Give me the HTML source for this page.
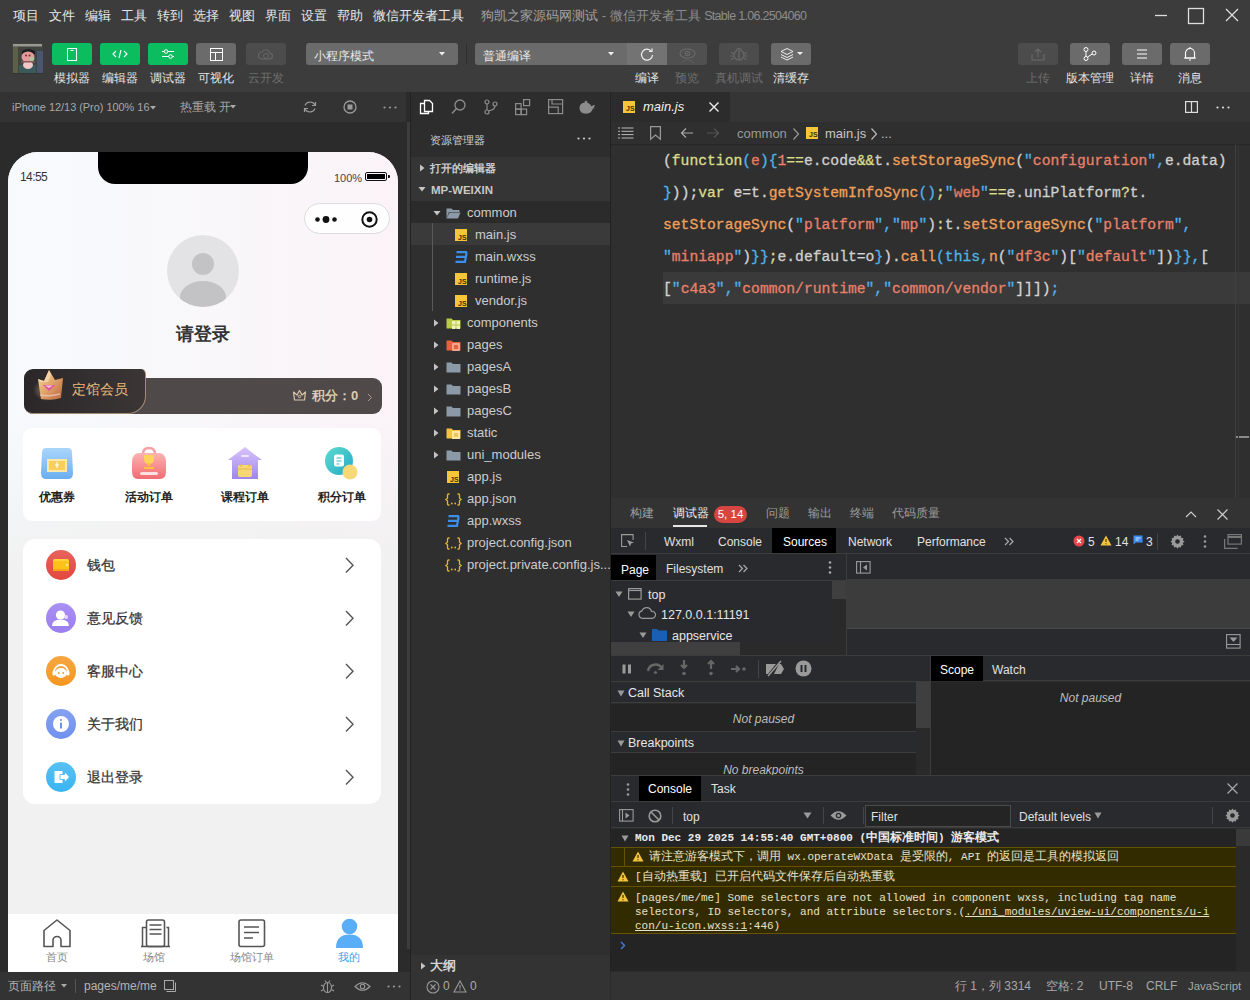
<!DOCTYPE html>
<html><head><meta charset="utf-8">
<style>
*{box-sizing:border-box;margin:0;padding:0}
html,body{width:1250px;height:1000px;overflow:hidden;background:#2c2c2c;font-family:"Liberation Sans",sans-serif;}
.a{position:absolute}
.w{white-space:nowrap}
svg{position:absolute;overflow:visible}
#top{left:0;top:0;width:1250px;height:92px;background:#3c3c3c}
.menu{top:1px;height:30px;line-height:30px;font-size:13px;color:#e8e8e8}
.tb{top:43px;width:40px;height:22px;border-radius:3px}
.g{background:#0bbd5f}
.gr{background:#6b6b6b}
.dm{background:#4c4c4c}
.lbl{top:71px;line-height:14px;font-size:12px;color:#e4e4e4;text-align:center}
.lbl.d{color:#6e6e6e}
/* explorer */
.row{left:411px;width:199px;height:22px;line-height:22px;font-size:13px;color:#cccccc}
.code{font-family:"Liberation Mono",monospace;font-size:14.68px;line-height:32px;height:32px;left:663px;white-space:pre;color:#d4d4d4;-webkit-text-stroke:0.3px currentColor}
.dt{font-size:12px;color:#e0e0e0;line-height:28px}
.mono{font-family:"Liberation Mono",monospace;font-size:11px;white-space:pre}
</style></head><body>
<div id="top" class="a">
  <div class="a menu w" style="left:13px">项目</div>
  <div class="a menu w" style="left:49px">文件</div>
  <div class="a menu w" style="left:85px">编辑</div>
  <div class="a menu w" style="left:121px">工具</div>
  <div class="a menu w" style="left:157px">转到</div>
  <div class="a menu w" style="left:193px">选择</div>
  <div class="a menu w" style="left:229px">视图</div>
  <div class="a menu w" style="left:265px">界面</div>
  <div class="a menu w" style="left:301px">设置</div>
  <div class="a menu w" style="left:337px">帮助</div>
  <div class="a menu w" style="left:373px">微信开发者工具</div>
  <div class="a menu w" style="left:481px;color:#a3a3a3">狗凯之家源码网测试 <span style="color:#8c8c8c">- 微信开发者工具 <span style="font-size:12.5px;letter-spacing:-0.7px">Stable 1.06.2504060</span></span></div>
  <!-- window controls -->
  <svg style="left:1150px;top:8px" width="100" height="16"><path d="M5 7.5h12" stroke="#ddd" stroke-width="1.3"/><rect x="38.5" y="0.5" width="15" height="15" fill="none" stroke="#ddd" stroke-width="1.3"/><path d="M76 1l12 12M88 1l-12 12" stroke="#ddd" stroke-width="1.3"/></svg>
  <!-- avatar -->
  <svg style="left:12px;top:43px;filter:blur(0.5px)" width="31" height="31"><rect x="0" y="0" width="31" height="31" fill="#3f4440"/><rect x="1" y="4" width="5" height="26" fill="#5e5f48"/><rect x="25" y="8" width="6" height="22" fill="#4a5670"/><rect x="7" y="22" width="17" height="9" fill="#3b5a5a"/><rect x="1" y="1" width="29" height="2.5" fill="#9a9890"/><path d="M10 8q6-4 13 0v3h-13z" fill="#1e1e1e"/><ellipse cx="16" cy="14" rx="6.5" ry="5.5" fill="#e39a9a"/><ellipse cx="20" cy="16" rx="2.5" ry="2" fill="#a8c8a0"/><circle cx="14" cy="12.5" r="1" fill="#7a2a2a"/><circle cx="17.5" cy="12.5" r="1" fill="#7a2a2a"/><ellipse cx="16" cy="22" rx="5" ry="4" fill="#f0c8c8"/><rect x="9" y="18" width="14" height="1.5" fill="#8a5a5a"/><rect x="0" y="30" width="31" height="1" fill="#333"/></svg>
  <div class="a tb g" style="left:52px"><svg style="left:15px;top:5px" width="10" height="13"><rect x="0.5" y="0.5" width="9" height="12" fill="none" stroke="#fff" stroke-width="1"/><path d="M3.5 2.5h3" stroke="#fff"/></svg></div>
  <div class="a tb g" style="left:100px"><svg style="left:12px;top:6px" width="16" height="10"><path d="M4 2L1 5l3 3M12 2l3 3-3 3M9 1L7 9" fill="none" stroke="#fff" stroke-width="1.1"/></svg></div>
  <div class="a tb g" style="left:148px"><svg style="left:13px;top:5px" width="14" height="12"><path d="M1 3.5h12M1 8.5h12" stroke="#fff" stroke-width="1"/><circle cx="5" cy="3.5" r="1.8" fill="#0bbd5f" stroke="#fff"/><circle cx="9.5" cy="8.5" r="1.8" fill="#0bbd5f" stroke="#fff"/></svg></div>
  <div class="a tb gr" style="left:196px"><svg style="left:14px;top:5px" width="13" height="13"><rect x="0.5" y="0.5" width="12" height="12" fill="none" stroke="#fff"/><path d="M0.5 4.5h12M5.5 4.5v8" stroke="#fff"/></svg></div>
  <div class="a tb dm" style="left:246px"><svg style="left:12px;top:6px" width="16" height="11"><path d="M4 10a3.5 3.5 0 0 1 0-7 4 4 0 0 1 7.5 1 3 3 0 0 1 0 6z" fill="none" stroke="#666" stroke-width="1.1"/><circle cx="8" cy="7" r="2.5" fill="none" stroke="#666"/></svg></div>
  <div class="a lbl w" style="left:52px;width:40px">模拟器</div>
  <div class="a lbl w" style="left:100px;width:40px">编辑器</div>
  <div class="a lbl w" style="left:148px;width:40px">调试器</div>
  <div class="a lbl w" style="left:196px;width:40px">可视化</div>
  <div class="a lbl d w" style="left:246px;width:40px">云开发</div>
  <!-- mode dropdown -->
  <div class="a" style="left:306px;top:43px;width:152px;height:22px;background:#6b6b6b;border-radius:3px;font-size:12px;line-height:27px;color:#e8e8e8;padding-left:8px" >小程序模式</div>
  <svg style="left:439px;top:52px" width="6" height="4"><path d="M0 0h6L3 3.5z" fill="#eee"/></svg>
  <div class="a" style="left:466px;top:43px;width:1px;height:22px;background:#303030"></div>
  <div class="a" style="left:475px;top:43px;width:152px;height:22px;background:#6b6b6b;border-radius:3px 0 0 3px;font-size:12px;line-height:27px;color:#e8e8e8;padding-left:8px" >普通编译</div>
  <svg style="left:608px;top:52px" width="6" height="4"><path d="M0 0h6L3 3.5z" fill="#eee"/></svg>
  <div class="a" style="left:627px;top:43px;width:40px;height:22px;background:#737373"><svg style="left:13px;top:4px" width="14" height="14"><path d="M11.5 4.5A5.5 5.5 0 1 0 12.5 8" fill="none" stroke="#f0f0f0" stroke-width="1.2"/><path d="M9 4.5h3V1.5" fill="none" stroke="#f0f0f0" stroke-width="1.2"/></svg></div>
  <div class="a" style="left:667px;top:43px;width:40px;height:22px;background:#505050;border-radius:0 3px 3px 0"><svg style="left:12px;top:5px" width="18" height="16"><ellipse cx="8.5" cy="5.5" rx="7.5" ry="4.5" fill="none" stroke="#6a6a6a" stroke-width="1.1"/><circle cx="8.5" cy="5.5" r="2.2" fill="none" stroke="#6a6a6a" stroke-width="1.1"/><circle cx="8.5" cy="5.5" r="0.8" fill="#6a6a6a"/><path d="M2 15l6.5-4 6.5 4M15 15l-6.5-4" fill="none" stroke="#5e5e5e" stroke-width="1"/></svg></div>
  <div class="a" style="left:719px;top:43px;width:40px;height:22px;background:#4c4c4c;border-radius:3px"><svg style="left:11px;top:4px" width="18" height="15"><circle cx="9" cy="8" r="5" fill="none" stroke="#686868" stroke-width="1.2"/><path d="M9 4v9M6.5 2.5q2.5-2 5 0M1 5.5l3 1.2M17 5.5l-3 1.2M0.5 9h3.5M17.5 9H14M1 12.5l3-1.2M17 12.5l-3-1.2" fill="none" stroke="#686868" stroke-width="1.2"/></svg></div>
  <div class="a" style="left:771px;top:43px;width:40px;height:22px;background:#6b6b6b;border-radius:3px"><svg style="left:9px;top:5px" width="24" height="12"><path d="M1 3.5l6-3 6 3-6 3z" fill="none" stroke="#f0f0f0" stroke-width="1"/><path d="M1 6.5l6 3 6-3M1 9l6 3 6-3" fill="none" stroke="#f0f0f0" stroke-width="1"/><path d="M17 4h6l-3 3z" fill="#f0f0f0"/></svg></div>
  <div class="a lbl w" style="left:627px;width:40px">编译</div>
  <div class="a lbl d w" style="left:667px;width:40px">预览</div>
  <div class="a lbl d w" style="left:709px;width:60px">真机调试</div>
  <div class="a lbl w" style="left:771px;width:40px">清缓存</div>
  <!-- right toolbar -->
  <div class="a tb dm" style="left:1018px"><svg style="left:13px;top:4px" width="14" height="14"><path d="M1 7v6h12V7" fill="none" stroke="#6a6a6a" stroke-width="1.1"/><path d="M7 10V2M4 5l3-3 3 3" fill="none" stroke="#6a6a6a" stroke-width="1.1"/></svg></div>
  <div class="a tb gr" style="left:1070px"><svg style="left:13px;top:4px" width="14" height="14"><circle cx="3" cy="2.5" r="2" fill="none" stroke="#fff"/><circle cx="3" cy="11.5" r="2" fill="none" stroke="#fff"/><circle cx="11" cy="6" r="2" fill="none" stroke="#fff"/><path d="M3 4.5v5M9.3 7L4.5 10" fill="none" stroke="#fff"/></svg></div>
  <div class="a tb gr" style="left:1122px"><svg style="left:14px;top:6px" width="12" height="10"><path d="M1 1h10M1 5h10M1 9h10" stroke="#fff" stroke-width="1.1"/></svg></div>
  <div class="a tb gr" style="left:1170px"><svg style="left:13px;top:3px" width="14" height="16"><path d="M2.5 12V7a4.5 4.5 0 0 1 9 0v5z" fill="none" stroke="#fff" stroke-width="1.1"/><path d="M1 12h12M7 1v1.5M6 14h2" stroke="#fff" stroke-width="1.1"/></svg></div>
  <div class="a lbl d w" style="left:1018px;width:40px">上传</div>
  <div class="a lbl w" style="left:1060px;width:60px">版本管理</div>
  <div class="a lbl w" style="left:1122px;width:40px">详情</div>
  <div class="a lbl w" style="left:1170px;width:40px">消息</div>
</div>
<!-- ============ SIMULATOR ============ -->
<div class="a" style="left:0;top:92px;width:411px;height:880px;background:#2b2b2b"></div>
<div class="a" style="left:0;top:92px;width:406px;height:30px;background:#333333"></div>
<div class="a w" style="left:12px;top:92px;line-height:30px;font-size:10.9px;color:#a8a8a8">iPhone 12/13 (Pro) 100% 16</div>
<svg style="left:150px;top:106px" width="6" height="4"><path d="M0 0h6L3 3.5z" fill="#aaa"/></svg>
<div class="a w" style="left:180px;top:92px;line-height:30px;font-size:12px;color:#a8a8a8">热重载 开</div>
<svg style="left:230px;top:105px" width="6" height="4"><path d="M0 0h6L3 3.5z" fill="#aaa"/></svg>
<svg style="left:303px;top:100px" width="14" height="14"><path d="M2 5.5A5.5 5.5 0 0 1 12 5M12 8.5A5.5 5.5 0 0 1 2 9" fill="none" stroke="#9a9a9a" stroke-width="1.2"/><path d="M12.5 2v3.5H9M1.5 12V8.5H5" fill="none" stroke="#9a9a9a" stroke-width="1.2"/></svg>
<svg style="left:343px;top:100px" width="14" height="14"><circle cx="7" cy="7" r="6" fill="none" stroke="#9a9a9a" stroke-width="1.3"/><rect x="4.5" y="4.5" width="5" height="5" fill="#9a9a9a"/></svg>
<svg style="left:383px;top:106px" width="14" height="3"><circle cx="1.5" cy="1.5" r="1.1" fill="#9a9a9a"/><circle cx="7" cy="1.5" r="1.1" fill="#9a9a9a"/><circle cx="12.5" cy="1.5" r="1.1" fill="#9a9a9a"/></svg>
<!-- sim scrollbar -->
<div class="a" style="left:407px;top:122px;width:3px;height:827px;background:#3d3d3d"></div>
<div class="a" style="left:410px;top:92px;width:1px;height:908px;background:#222"></div>
<!-- phone -->
<div class="a" style="left:8px;top:152px;width:390px;height:820px;border-radius:30px 30px 0 0;overflow:hidden;background:#f1f1f1">
  <div class="a" style="left:0;top:0;width:390px;height:420px;background:linear-gradient(90deg,#f7fafd 0%,#f9f7fa 55%,#fbf3f8 100%)"></div>
  <div class="a" style="left:0;top:260px;width:390px;height:160px;background:linear-gradient(180deg,rgba(241,241,241,0) 0%,#f1f1f1 100%)"></div>
  <!-- notch -->
  <div class="a" style="left:90px;top:0;width:210px;height:32px;background:#000;border-radius:0 0 17px 17px"></div>
  <div class="a w" style="left:12px;top:17.5px;font-size:12px;line-height:14px;color:#333;letter-spacing:-0.6px">14:55</div>
  <div class="a w" style="left:326px;top:20px;font-size:11px;line-height:12px;color:#444">100%</div>
  <div class="a" style="left:357px;top:20px;width:22px;height:9px;border:1.5px solid #111;border-radius:2px;padding:1px"><div style="width:100%;height:100%;background:#000"></div></div>
  <div class="a" style="left:379.5px;top:23px;width:2px;height:3px;background:#111;border-radius:0 1px 1px 0"></div>
  <!-- capsule -->
  <div class="a" style="left:296px;top:51px;width:86px;height:31px;border-radius:16px;background:rgba(255,255,255,0.85);border:1px solid #dcdcdc"></div>
  <svg style="left:310px;top:61px" width="80" height="16"><circle cx="-0.5" cy="6.5" r="2.3" fill="#111"/><circle cx="8" cy="6.5" r="3.4" fill="#111"/><circle cx="16.5" cy="6.5" r="2.3" fill="#111"/><circle cx="51.5" cy="6.5" r="7.2" fill="none" stroke="#111" stroke-width="2"/><circle cx="51.5" cy="6.5" r="2.8" fill="#111"/></svg>
  <!-- avatar -->
  <div class="a" style="left:158.5px;top:83px;width:72px;height:72px;border-radius:50%;background:#e3e3e5;overflow:hidden">
    <div class="a" style="left:25px;top:17.5px;width:22px;height:22px;border-radius:50%;background:#c3c3c5"></div>
    <div class="a" style="left:13px;top:46px;width:46px;height:32px;border-radius:50%;background:#c3c3c5"></div>
  </div>
  <div class="a w" style="left:0;top:172px;width:390px;text-align:center;font-size:17.5px;line-height:20px;font-weight:bold;color:#333">请登录</div>
  <!-- member bar -->
  <div class="a" style="left:16px;top:226px;width:358px;height:36px;border-radius:9px;background:#4f494a"></div>
  <div class="a" style="left:16px;top:217px;width:122px;height:45px;border-radius:9px 5px 18px 9px;background:linear-gradient(90deg,#2b2728,#3b3536);border-right:1.5px solid #a38b74;border-bottom:1.5px solid #a38b74;border-left:0;border-top:0"></div>
  <svg style="left:25px;top:216px" width="36" height="34"><defs><linearGradient id="cr" x1="0" y1="0" x2="1" y2="1"><stop offset="0" stop-color="#f7dcaa"/><stop offset="0.5" stop-color="#e0a46a"/><stop offset="1" stop-color="#b8643e"/></linearGradient><radialGradient id="gl" cx="0.5" cy="0.5" r="0.5"><stop offset="0" stop-color="#ffd9b0" stop-opacity="0.55"/><stop offset="1" stop-color="#ffd9b0" stop-opacity="0"/></radialGradient></defs><ellipse cx="14" cy="22" rx="14" ry="11" fill="url(#gl)"/><path d="M5 11l6 2 5-11 6 10 8-2-2 20q-8 3-20 1z" fill="url(#cr)"/><path d="M5 11l6 2 5-11 2 4-3 8-8 0z" fill="#fbe3b8" opacity="0.6"/><path d="M10 17h12l-6 6z" fill="#e05596"/><path d="M12 17.5h8l-4 2.5z" fill="#ffc3df"/><path d="M7 27q9 2 20-1" stroke="#f6c9c9" stroke-width="1.5" fill="none" opacity="0.7"/></svg>
  <div class="a w" style="left:64px;top:229px;font-size:14px;line-height:16px;color:#e9b97c">定馆会员</div>
  <svg style="left:284px;top:237px" width="15" height="12"><path d="M1.5 3l3.5 3 2.5-4.5 2.5 4.5 3.5-3-1 8h-10z" fill="none" stroke="#d8c6ac" stroke-width="1.2" stroke-linejoin="round"/><circle cx="7.5" cy="7.5" r="1.2" fill="none" stroke="#d8c6ac"/></svg>
  <div class="a w" style="left:304px;top:236px;font-size:13px;line-height:16px;color:#dccbb2;font-weight:bold">积分：0</div>
  <svg style="left:359px;top:241px" width="6" height="9"><path d="M1 1l3.5 3.5L1 8" fill="none" stroke="#aa9c90" stroke-width="1"/></svg>
  <!-- quick card -->
  <div class="a" style="left:15px;top:276px;width:358px;height:93px;border-radius:9px;background:#fff"></div>
  
  <svg style="left:32px;top:294px" width="34" height="34"><defs><linearGradient id="q1" x1="0" y1="0" x2="0" y2="1"><stop offset="0" stop-color="#a9d6fb"/><stop offset="1" stop-color="#6aaef0"/></linearGradient><linearGradient id="q2" x1="0" y1="0" x2="0" y2="1"><stop offset="0" stop-color="#fcb3b3"/><stop offset="1" stop-color="#f26b73"/></linearGradient><linearGradient id="q3" x1="0" y1="0" x2="0" y2="1"><stop offset="0" stop-color="#d7c4fb"/><stop offset="1" stop-color="#9f86ee"/></linearGradient><linearGradient id="q4" x1="0" y1="0" x2="1" y2="1"><stop offset="0" stop-color="#5fdcd0"/><stop offset="1" stop-color="#22a9c6"/></linearGradient></defs>
  <path d="M6 2h22q4 0 4 5l1 20q0 6-5 6H6q-5 0-5-6l1-20q0-5 4-5z" fill="url(#q1)"/><rect x="7" y="13" width="20" height="13" fill="#fde9a6"/><rect x="9" y="15" width="16" height="9" fill="#f8cf5a"/><path d="M17 16v6M15 19h4" stroke="#fff" stroke-width="1.2"/></svg>
  <svg style="left:123px;top:294px" width="36" height="34"><path d="M12 8q0-6 6-6t6 6" fill="none" stroke="#f8a0a6" stroke-width="2.5"/><path d="M8 7h20q6 0 7 8l0 10q0 8-6 8H7q-6 0-6-8l0-10q1-8 7-8z" fill="url(#q2)"/><path d="M13 9h10v4q0 5-5 5t-5-5z" fill="#ffd25a"/><rect x="16.5" y="17" width="3" height="3" fill="#ffc03a"/><rect x="13" y="21" width="10" height="2" fill="#ffc03a"/><rect x="9" y="26" width="18" height="3" rx="1.5" fill="#fde0e0"/></svg>
  <svg style="left:219px;top:294px" width="36" height="34"><path d="M18 1L35 14h-4v19H5V14H1z" fill="url(#q3)"/><rect x="14" y="9" width="8" height="2" rx="1" fill="#efe6ff"/><rect x="11" y="19" width="14" height="12" rx="2" fill="#f7d774"/><path d="M14 18v3M22 18v3M11 23h14" stroke="#e4b84a" stroke-width="1.2"/></svg>
  <svg style="left:316px;top:294px" width="36" height="36"><circle cx="15" cy="15" r="14" fill="url(#q4)"/><circle cx="26" cy="26" r="7.5" fill="#f8d877"/><rect x="10" y="8.5" width="10" height="12" rx="2" fill="#fff"/><path d="M12.5 12h5M12.5 15h5M12.5 18h3" stroke="#36b9c8" stroke-width="1.1"/></svg>

  <div class="a w" style="left:31px;top:338px;font-size:12px;line-height:15px;color:#222;font-weight:bold">优惠券</div>
  <div class="a w" style="left:116.7px;top:338px;font-size:12px;line-height:15px;color:#222;font-weight:bold">活动订单</div>
  <div class="a w" style="left:213.3px;top:338px;font-size:12px;line-height:15px;color:#222;font-weight:bold">课程订单</div>
  <div class="a w" style="left:310px;top:338px;font-size:12px;line-height:15px;color:#222;font-weight:bold">积分订单</div>
  <!-- menu card -->
  <div class="a" style="left:15px;top:387px;width:358px;height:265px;border-radius:12px;background:#fff"></div>
    <svg style="left:37.6px;top:398.4px" width="30" height="30"><defs><linearGradient id="m0" x1="0" y1="0" x2="0" y2="1"><stop offset="0" stop-color="#e2473f" stop-opacity="0.85"/><stop offset="1" stop-color="#e2473f"/></linearGradient></defs><circle cx="15" cy="15" r="15" fill="url(#m0)"/><rect x="7" y="9" width="16" height="12" rx="1.5" fill="#ffd43b"/><rect x="7" y="11" width="16" height="10" rx="1.5" fill="#ffc21a"/><rect x="7" y="19" width="16" height="2" fill="#f6a41a"/><circle cx="21" cy="15" r="1.3" fill="#ffe58a"/></svg>
  <div class="a w" style="left:79px;top:405.4px;font-size:14px;line-height:16px;color:#333;font-weight:500;-webkit-text-stroke:0.25px #333">钱包</div>
  <svg style="left:337px;top:405.4px" width="10" height="16"><path d="M1 1l7 7.3L1 15.5" fill="none" stroke="#555" stroke-width="1.4"/></svg>
  <svg style="left:37.6px;top:451.4px" width="30" height="30"><defs><linearGradient id="m1" x1="0" y1="0" x2="0" y2="1"><stop offset="0" stop-color="#9a7df0" stop-opacity="0.85"/><stop offset="1" stop-color="#9a7df0"/></linearGradient></defs><circle cx="15" cy="15" r="15" fill="url(#m1)"/><circle cx="14.5" cy="12" r="4.6" fill="#fff"/><path d="M6 23q0-6.5 8.5-6.5t8.5 6.5z" fill="#fff"/><circle cx="20" cy="14" r="2" fill="#e7dcff"/></svg>
  <div class="a w" style="left:79px;top:458.4px;font-size:14px;line-height:16px;color:#333;font-weight:500;-webkit-text-stroke:0.25px #333">意见反馈</div>
  <svg style="left:337px;top:458.4px" width="10" height="16"><path d="M1 1l7 7.3L1 15.5" fill="none" stroke="#555" stroke-width="1.4"/></svg>
  <svg style="left:37.6px;top:504.4px" width="30" height="30"><defs><linearGradient id="m2" x1="0" y1="0" x2="0" y2="1"><stop offset="0" stop-color="#f5971f" stop-opacity="0.85"/><stop offset="1" stop-color="#f5971f"/></linearGradient></defs><circle cx="15" cy="15" r="15" fill="url(#m2)"/><path d="M8 16a7 7 0 0 1 14 0" fill="none" stroke="#fff" stroke-width="1.8"/><ellipse cx="15" cy="17" rx="6" ry="5" fill="#fff"/><rect x="6.5" y="14.5" width="3" height="5" rx="1.5" fill="#fff"/><rect x="20.5" y="14.5" width="3" height="5" rx="1.5" fill="#fff"/><circle cx="12.8" cy="17" r="0.9" fill="#f5971f"/><circle cx="17.2" cy="17" r="0.9" fill="#f5971f"/></svg>
  <div class="a w" style="left:79px;top:511.4px;font-size:14px;line-height:16px;color:#333;font-weight:500;-webkit-text-stroke:0.25px #333">客服中心</div>
  <svg style="left:337px;top:511.4px" width="10" height="16"><path d="M1 1l7 7.3L1 15.5" fill="none" stroke="#555" stroke-width="1.4"/></svg>
  <svg style="left:37.6px;top:557.4px" width="30" height="30"><defs><linearGradient id="m3" x1="0" y1="0" x2="0" y2="1"><stop offset="0" stop-color="#6f91ee" stop-opacity="0.85"/><stop offset="1" stop-color="#6f91ee"/></linearGradient></defs><circle cx="15" cy="15" r="15" fill="url(#m3)"/><circle cx="15" cy="15" r="8" fill="#fff"/><rect x="14" y="13.5" width="2" height="6" rx="0.5" fill="#6f91ee"/><circle cx="15" cy="11" r="1.1" fill="#6f91ee"/></svg>
  <div class="a w" style="left:79px;top:564.4px;font-size:14px;line-height:16px;color:#333;font-weight:500;-webkit-text-stroke:0.25px #333">关于我们</div>
  <svg style="left:337px;top:564.4px" width="10" height="16"><path d="M1 1l7 7.3L1 15.5" fill="none" stroke="#555" stroke-width="1.4"/></svg>
  <svg style="left:37.6px;top:610.4px" width="30" height="30"><defs><linearGradient id="m4" x1="0" y1="0" x2="0" y2="1"><stop offset="0" stop-color="#3ab5f2" stop-opacity="0.85"/><stop offset="1" stop-color="#3ab5f2"/></linearGradient></defs><circle cx="15" cy="15" r="15" fill="url(#m4)"/><path d="M8.5 9h8v12h-8z" fill="#fff"/><path d="M14 12.5h4.5v-3l5 5.5-5 5.5v-3H14z" fill="#fff" stroke="#3ab5f2" stroke-width="0.8"/></svg>
  <div class="a w" style="left:79px;top:617.4px;font-size:14px;line-height:16px;color:#333;font-weight:500;-webkit-text-stroke:0.25px #333">退出登录</div>
  <svg style="left:337px;top:617.4px" width="10" height="16"><path d="M1 1l7 7.3L1 15.5" fill="none" stroke="#555" stroke-width="1.4"/></svg>

  <!-- tabbar -->
  <div class="a" style="left:0;top:762px;width:390px;height:58px;background:#fff"></div>
    <svg style="left:35px;top:767px" width="29" height="29"><path d="M1 11.5L14 1l13 10.5V27.5h-9v-6a4 4 0 0 0-8 0v6H1z" fill="none" stroke="#555" stroke-width="1.6" stroke-linejoin="round"/></svg>
  <div class="a w" style="left:0;top:799px;width:97.5px;text-align:center;font-size:10.5px;line-height:12px;color:#888">首页</div>
  <svg style="left:133px;top:767px" width="29" height="29"><path d="M1.5 27.5V8.5h4M25.5 8.5h2v19" fill="none" stroke="#555" stroke-width="1.5"/><rect x="5.5" y="1" width="18" height="26.5" rx="2" fill="none" stroke="#555" stroke-width="1.6"/><path d="M8.5 6h12M8.5 10.5h12M8.5 15h12" stroke="#555" stroke-width="1.6"/><path d="M0 27.5h29" stroke="#555" stroke-width="1.6"/></svg>
  <div class="a w" style="left:97.5px;top:799px;width:97.5px;text-align:center;font-size:10.5px;line-height:12px;color:#888">场馆</div>
  <svg style="left:229px;top:767px" width="29" height="29"><rect x="2" y="1" width="25.5" height="26.5" rx="2" fill="none" stroke="#555" stroke-width="1.6"/><path d="M7 8h15M7 13.5h15M7 19h9" stroke="#555" stroke-width="1.6"/></svg>
  <div class="a w" style="left:195px;top:799px;width:97.5px;text-align:center;font-size:10.5px;line-height:12px;color:#888">场馆订单</div>
  <svg style="left:327px;top:766px" width="29" height="30"><circle cx="14.5" cy="8.5" r="7.8" fill="#5aaef7"/><path d="M1 30q0-13.5 13.5-13.5T28 30z" fill="#5aaef7"/></svg>
  <div class="a w" style="left:292.5px;top:799px;width:97.5px;text-align:center;font-size:10.5px;line-height:12px;color:#3d9ae8">我的</div>

</div>
<!-- sim status bar -->
<div class="a" style="left:0;top:972px;width:410px;height:28px;background:#333333"></div>
<div class="a w" style="left:8px;top:972px;line-height:28px;font-size:12px;color:#b4b4b4">页面路径</div>
<svg style="left:61px;top:984px" width="6" height="4"><path d="M0 0h6L3 3.5z" fill="#aaa"/></svg>
<div class="a" style="left:75px;top:979px;width:1px;height:14px;background:#555"></div>
<div class="a w" style="left:84px;top:972px;line-height:28px;font-size:12px;color:#b4b4b4">pages/me/me</div>
<svg style="left:164px;top:980px" width="12" height="12"><path d="M2.5 11.5h9v-9" fill="none" stroke="#aaa"/><rect x="0.5" y="0.5" width="9" height="9" fill="none" stroke="#aaa" stroke-dasharray="0"/></svg>
<svg style="left:320px;top:979px" width="15" height="15"><ellipse cx="7.5" cy="8.5" rx="4" ry="5" fill="none" stroke="#999" stroke-width="1.1"/><path d="M7.5 4v10M1 6l2.5 1.5M14 6l-2.5 1.5M1 12l2.5-1.5M14 12l-2.5-1.5M5 1.5l1.5 2M10 1.5l-1.5 2" stroke="#999" stroke-width="1.1"/></svg>
<svg style="left:354px;top:981px" width="17" height="11"><path d="M1 5.5Q8.5 -2 16 5.5Q8.5 13 1 5.5z" fill="none" stroke="#999" stroke-width="1.1"/><circle cx="8.5" cy="5.5" r="2.2" fill="none" stroke="#999" stroke-width="1.1"/></svg>
<svg style="left:387px;top:985px" width="14" height="3"><circle cx="1.5" cy="1.5" r="1.1" fill="#999"/><circle cx="7" cy="1.5" r="1.1" fill="#999"/><circle cx="12.5" cy="1.5" r="1.1" fill="#999"/></svg>
<!-- ============ EXPLORER ============ -->
<div class="a" style="left:411px;top:92px;width:199px;height:880px;background:#2f2f2f"></div>
<div class="a" style="left:411px;top:92px;width:199px;height:65px;background:#2d2d2d"></div>
<svg style="left:419px;top:99px" width="15" height="16"><path d="M5.5 1.5h5l3 3v8h-8z" fill="none" stroke="#fff" stroke-width="1.3"/><path d="M5.5 4.5h-4v10h8v-2" fill="none" stroke="#fff" stroke-width="1.3"/></svg>
<svg style="left:451px;top:99px" width="15" height="16"><circle cx="9" cy="6" r="5" fill="none" stroke="#8c8c8c" stroke-width="1.3"/><path d="M5.5 9.5L1 14.5" stroke="#8c8c8c" stroke-width="1.5"/></svg>
<svg style="left:484px;top:99px" width="14" height="16"><circle cx="3" cy="3" r="2" fill="none" stroke="#8c8c8c" stroke-width="1.2"/><circle cx="3" cy="13" r="2" fill="none" stroke="#8c8c8c" stroke-width="1.2"/><circle cx="11" cy="5" r="2" fill="none" stroke="#8c8c8c" stroke-width="1.2"/><path d="M3 5v6M11 7q0 4-7 5" fill="none" stroke="#8c8c8c" stroke-width="1.2"/></svg>
<svg style="left:515px;top:99px" width="16" height="16"><rect x="0.6" y="4.6" width="5.5" height="5.5" fill="none" stroke="#8c8c8c" stroke-width="1.2"/><rect x="0.6" y="10.1" width="5.5" height="5.5" fill="none" stroke="#8c8c8c" stroke-width="1.2"/><rect x="6.1" y="10.1" width="5.5" height="5.5" fill="none" stroke="#8c8c8c" stroke-width="1.2"/><rect x="8.6" y="0.6" width="6" height="6" fill="none" stroke="#8c8c8c" stroke-width="1.2"/></svg>
<svg style="left:548px;top:99px" width="16" height="16"><rect x="0.6" y="0.6" width="14" height="14" fill="none" stroke="#8c8c8c" stroke-width="1.2"/><path d="M4 0.6v4.4h10.4M0.6 8.2h9.6v6.4" fill="none" stroke="#8c8c8c" stroke-width="1.2"/></svg>
<svg style="left:578px;top:99px" width="20" height="16"><path d="M1.5 9q0-5 5.5-5.5q5 0 6.5 4l2-1.5 2 0.8-2 1.3 1.5 1.5-2-0.3q-1 5-7 5.5Q1.5 14.5 1.5 9z" fill="#8c8c8c"/><circle cx="8" cy="3" r="1.3" fill="#8c8c8c"/></svg>
<div class="a w" style="left:430px;top:130px;font-size:11px;line-height:20px;color:#d0d0d0">资源管理器</div>
<svg style="left:577px;top:137px" width="14" height="3"><circle cx="1.5" cy="1.5" r="1.1" fill="#ccc"/><circle cx="7" cy="1.5" r="1.1" fill="#ccc"/><circle cx="12.5" cy="1.5" r="1.1" fill="#ccc"/></svg>
<div class="a" style="left:411px;top:157px;width:199px;height:44px;background:#353535"></div>
<div class="a" style="left:411px;top:201px;width:199px;height:22px;background:#2b2b2b"></div>
<svg style="left:419px;top:164px" width="6" height="8"><path d="M1 0.5l4.5 3.5L1 7.5z" fill="#c5c5c5"/></svg><div class="a w" style="left:430px;top:157px;line-height:22px;font-size:11px;font-weight:bold;color:#cccccc">打开的编辑器</div>
<svg style="left:418px;top:186px" width="8" height="6"><path d="M0.5 1h7L4 5.5z" fill="#c5c5c5"/></svg><div class="a w" style="left:431px;top:179px;line-height:22px;font-size:11.5px;font-weight:bold;color:#c8c8c8">MP-WEIXIN</div>
<div class="a" style="left:411px;top:223px;width:199px;height:22px;background:#3a3a3a"></div>
<div class="a" style="left:432px;top:223px;width:1px;height:88px;background:#5a5a5a"></div>
<svg style="left:433px;top:210px" width="8" height="6"><path d="M0.5 1h7L4 5.5z" fill="#c5c5c5"/></svg><svg style="left:446px;top:207px" width="15" height="12"><path d="M0.5 1.5h5l1.5 1.5h6.5v2H3l-2.5 6.5z" fill="#8b9aa6"/><path d="M3.5 5.5h11l-2.5 6h-11.5z" fill="#8b9aa6"/></svg><div class="row a w" style="left:467px;top:202px;width:auto">common</div>
<div class="a" style="left:455px;top:229px;width:12px;height:12px;background:#f5c63a"><div class="a" style="left:3px;top:5px;font-size:7px;line-height:8px;color:#3a3000;font-weight:bold;font-family:'Liberation Sans'">JS</div></div><div class="row a w" style="left:475px;top:224px;width:auto">main.js</div>
<svg style="left:455px;top:251px" width="13" height="12"><path d="M1.5 1.2h10.5M1 5.8h10M11.7 1.2L10 10.8H0.5" fill="none" stroke="#3b8eea" stroke-width="2.2"/></svg><div class="row a w" style="left:475px;top:246px;width:auto">main.wxss</div>
<div class="a" style="left:455px;top:273px;width:12px;height:12px;background:#f5c63a"><div class="a" style="left:3px;top:5px;font-size:7px;line-height:8px;color:#3a3000;font-weight:bold;font-family:'Liberation Sans'">JS</div></div><div class="row a w" style="left:475px;top:268px;width:auto">runtime.js</div>
<div class="a" style="left:455px;top:295px;width:12px;height:12px;background:#f5c63a"><div class="a" style="left:3px;top:5px;font-size:7px;line-height:8px;color:#3a3000;font-weight:bold;font-family:'Liberation Sans'">JS</div></div><div class="row a w" style="left:475px;top:290px;width:auto">vendor.js</div>
<svg style="left:432.5px;top:319px" width="6" height="8"><path d="M1 0.5l4.5 3.5L1 7.5z" fill="#c5c5c5"/></svg><svg style="left:446px;top:317px" width="15" height="12"><path d="M0.5 1.5h5l1.5 1.5h7.5v8.5h-14z" fill="#b8cc3c"/></svg><svg style="left:452px;top:321px" width="9" height="9"><rect x="0" y="0" width="3.5" height="3.5" fill="#f0f0c0"/><rect x="4.5" y="0" width="3.5" height="3.5" fill="#f0f0c0"/><rect x="0" y="4.5" width="3.5" height="3.5" fill="#f0f0c0"/><rect x="4.5" y="4.5" width="3.5" height="3.5" fill="#f0f0c0"/></svg><div class="row a w" style="left:467px;top:312px;width:auto">components</div>
<svg style="left:432.5px;top:341px" width="6" height="8"><path d="M1 0.5l4.5 3.5L1 7.5z" fill="#c5c5c5"/></svg><svg style="left:446px;top:339px" width="15" height="12"><path d="M0.5 1.5h5l1.5 1.5h7.5v8.5h-14z" fill="#e8613c"/></svg><svg style="left:452px;top:343px" width="9" height="9"><rect x="0" y="0" width="8" height="8" rx="1" fill="#f4a48c"/><rect x="2" y="2" width="4" height="4" fill="#e8613c"/></svg><div class="row a w" style="left:467px;top:334px;width:auto">pages</div>
<svg style="left:432.5px;top:363px" width="6" height="8"><path d="M1 0.5l4.5 3.5L1 7.5z" fill="#c5c5c5"/></svg><svg style="left:446px;top:361px" width="15" height="12"><path d="M0.5 1.5h5l1.5 1.5h7.5v8.5h-14z" fill="#8b9aa6"/></svg><div class="row a w" style="left:467px;top:356px;width:auto">pagesA</div>
<svg style="left:432.5px;top:385px" width="6" height="8"><path d="M1 0.5l4.5 3.5L1 7.5z" fill="#c5c5c5"/></svg><svg style="left:446px;top:383px" width="15" height="12"><path d="M0.5 1.5h5l1.5 1.5h7.5v8.5h-14z" fill="#8b9aa6"/></svg><div class="row a w" style="left:467px;top:378px;width:auto">pagesB</div>
<svg style="left:432.5px;top:407px" width="6" height="8"><path d="M1 0.5l4.5 3.5L1 7.5z" fill="#c5c5c5"/></svg><svg style="left:446px;top:405px" width="15" height="12"><path d="M0.5 1.5h5l1.5 1.5h7.5v8.5h-14z" fill="#8b9aa6"/></svg><div class="row a w" style="left:467px;top:400px;width:auto">pagesC</div>
<svg style="left:432.5px;top:429px" width="6" height="8"><path d="M1 0.5l4.5 3.5L1 7.5z" fill="#c5c5c5"/></svg><svg style="left:446px;top:427px" width="15" height="12"><path d="M0.5 1.5h5l1.5 1.5h7.5v8.5h-14z" fill="#f5c242"/></svg><svg style="left:452px;top:431px" width="9" height="9"><rect x="0" y="0" width="8" height="8" fill="#fde7a0"/><path d="M2 3h4M2 5h4" stroke="#d9a020"/></svg><div class="row a w" style="left:467px;top:422px;width:auto">static</div>
<svg style="left:432.5px;top:451px" width="6" height="8"><path d="M1 0.5l4.5 3.5L1 7.5z" fill="#c5c5c5"/></svg><svg style="left:446px;top:449px" width="15" height="12"><path d="M0.5 1.5h5l1.5 1.5h7.5v8.5h-14z" fill="#8b9aa6"/></svg><div class="row a w" style="left:467px;top:444px;width:auto">uni_modules</div>
<div class="a" style="left:447px;top:471px;width:12px;height:12px;background:#f5c63a"><div class="a" style="left:3px;top:5px;font-size:7px;line-height:8px;color:#3a3000;font-weight:bold;font-family:'Liberation Sans'">JS</div></div><div class="row a w" style="left:467px;top:466px;width:auto">app.js</div>
<svg style="left:445px;top:493px" width="17" height="13"><path d="M4.5 1h-1q-1 0-1 1v3.2l-1.6 1.3l1.6 1.3v3.2q0 1 1 1h1M12.5 1h1q1 0 1 1v3.2l1.6 1.3l-1.6 1.3v3.2q0 1-1 1h-1" fill="none" stroke="#e2b52e" stroke-width="1.3"/><circle cx="6.8" cy="10.5" r="0.9" fill="#e2b52e"/><circle cx="10.2" cy="10.5" r="0.9" fill="#e2b52e"/></svg><div class="row a w" style="left:467px;top:488px;width:auto">app.json</div>
<svg style="left:447px;top:515px" width="13" height="12"><path d="M1.5 1.2h10.5M1 5.8h10M11.7 1.2L10 10.8H0.5" fill="none" stroke="#3b8eea" stroke-width="2.2"/></svg><div class="row a w" style="left:467px;top:510px;width:auto">app.wxss</div>
<svg style="left:445px;top:537px" width="17" height="13"><path d="M4.5 1h-1q-1 0-1 1v3.2l-1.6 1.3l1.6 1.3v3.2q0 1 1 1h1M12.5 1h1q1 0 1 1v3.2l1.6 1.3l-1.6 1.3v3.2q0 1-1 1h-1" fill="none" stroke="#e2b52e" stroke-width="1.3"/><circle cx="6.8" cy="10.5" r="0.9" fill="#e2b52e"/><circle cx="10.2" cy="10.5" r="0.9" fill="#e2b52e"/></svg><div class="row a w" style="left:467px;top:532px;width:auto">project.config.json</div>
<svg style="left:445px;top:559px" width="17" height="13"><path d="M4.5 1h-1q-1 0-1 1v3.2l-1.6 1.3l1.6 1.3v3.2q0 1 1 1h1M12.5 1h1q1 0 1 1v3.2l1.6 1.3l-1.6 1.3v3.2q0 1-1 1h-1" fill="none" stroke="#e2b52e" stroke-width="1.3"/><circle cx="6.8" cy="10.5" r="0.9" fill="#e2b52e"/><circle cx="10.2" cy="10.5" r="0.9" fill="#e2b52e"/></svg><div class="row a w" style="left:467px;top:554px;width:auto">project.private.config.js...</div>
<div class="a" style="left:411px;top:955px;width:199px;height:45px;background:#333333"></div>
<svg style="left:420px;top:962px" width="6" height="8"><path d="M1 0.5l4.5 3.5L1 7.5z" fill="#c5c5c5"/></svg>
<div class="a w" style="left:430px;top:955px;line-height:22px;font-size:12.5px;font-weight:bold;color:#d4d4d4">大纲</div>
<svg style="left:426px;top:980px" width="13" height="13"><circle cx="7" cy="7" r="6" fill="none" stroke="#999" stroke-width="1.1"/><path d="M4.5 4.5l5 5M9.5 4.5l-5 5" stroke="#999" stroke-width="1.1"/></svg>
<div class="a w" style="left:443px;top:977px;line-height:18px;font-size:12px;color:#aaa">0</div>
<svg style="left:453px;top:980px" width="14" height="13"><path d="M7 1L13 12H1z" fill="none" stroke="#999" stroke-width="1.1"/><path d="M7 5v3.5M7 9.5v1" stroke="#999" stroke-width="1.1"/></svg>
<div class="a w" style="left:470px;top:977px;line-height:18px;font-size:12px;color:#aaa">0</div>
<!-- ============ EDITOR ============ -->
<div class="a" style="left:610px;top:92px;width:1px;height:880px;background:#222"></div>
<div class="a" style="left:611px;top:92px;width:639px;height:406px;background:#2f2f2f"></div>
<div class="a" style="left:611px;top:92px;width:639px;height:30px;background:#353535"></div>
<div class="a" style="left:611px;top:92px;width:119px;height:30px;background:#2c2c2c"></div>
<div class="a" style="left:623px;top:101px;width:12px;height:12px;background:#f5c63a"><div class="a" style="left:3px;top:4px;font-size:7px;line-height:8px;color:#3a3000;font-weight:bold">JS</div></div>
<div class="a w" style="left:643px;top:99px;font-size:13px;line-height:16px;font-style:italic;color:#f0f0f0">main.js</div>
<svg style="left:709px;top:102px" width="10" height="10"><path d="M0.5 0.5l9 9M9.5 0.5l-9 9" stroke="#eee" stroke-width="1.4"/></svg>
<svg style="left:1185px;top:101px" width="13" height="12"><rect x="0.6" y="0.6" width="11.8" height="10.8" fill="none" stroke="#ddd" stroke-width="1.2"/><path d="M6.5 0.6v10.8" stroke="#ddd" stroke-width="1.2"/></svg>
<svg style="left:1216px;top:106px" width="14" height="3"><circle cx="1.5" cy="1.5" r="1.1" fill="#ddd"/><circle cx="7" cy="1.5" r="1.1" fill="#ddd"/><circle cx="12.5" cy="1.5" r="1.1" fill="#ddd"/></svg>
<div class="a" style="left:611px;top:122px;width:639px;height:22px;background:#2f2f2f"></div>
<svg style="left:618px;top:127px" width="16" height="12"><path d="M0 1h2M0 4.3h2M0 7.6h2M0 11h2M3.5 1h12M3.5 4.3h12M3.5 7.6h12M3.5 11h12" stroke="#bbb" stroke-width="1"/></svg>
<svg style="left:650px;top:126px" width="11" height="14"><path d="M0.6 0.6h9.8v12.5L5.5 9 0.6 13.1z" fill="none" stroke="#9a9a9a" stroke-width="1.2"/></svg>
<svg style="left:680px;top:127px" width="14" height="12"><path d="M13 6H1.5M6 1.5L1.5 6 6 10.5" fill="none" stroke="#aaa" stroke-width="1.2"/></svg>
<svg style="left:706px;top:127px" width="14" height="12"><path d="M1 6h11.5M8 1.5l4.5 4.5L8 10.5" fill="none" stroke="#555" stroke-width="1.2"/></svg>
<div class="a w" style="left:737px;top:123px;line-height:22px;font-size:13px;color:#9a9a9a">common</div>
<svg style="left:793px;top:128px" width="7" height="12"><path d="M0.5 0.5l5 5.5-5 5.5" fill="none" stroke="#999" stroke-width="1.2"/></svg>
<div class="a" style="left:806px;top:127px;width:12px;height:12px;background:#f5c63a"><div class="a" style="left:3px;top:4px;font-size:7px;line-height:8px;color:#3a3000;font-weight:bold">JS</div></div>
<div class="a w" style="left:825px;top:123px;line-height:22px;font-size:13px;color:#c8c8c8">main.js</div>
<svg style="left:871px;top:128px" width="7" height="12"><path d="M0.5 0.5l5 5.5-5 5.5" fill="none" stroke="#bbb" stroke-width="1.2"/></svg>
<div class="a w" style="left:881px;top:123px;line-height:22px;font-size:13px;color:#bbb">...</div>
<div class="a" style="left:611px;top:144px;width:639px;height:2px;background:linear-gradient(#222,transparent)"></div>
<div class="a" style="left:663px;top:272px;width:587px;height:32px;background:#3a3a3a"></div>
<div class="a" style="left:1235px;top:144px;width:1px;height:354px;background:#3f3f3f"></div>
<div class="a" style="left:1236px;top:436px;width:13px;height:2px;background:#8a8a8a"></div><div class="a" style="left:1238px;top:144px;width:1px;height:354px;background:#353535"></div>
<div class="a code" style="top:calc(144px + 1px)"><span style="color:#d4d4d4">(</span><span style="color:#dcdc8b">function</span><span style="color:#4fb3e8">(</span><span style="color:#e7795f">e</span><span style="color:#4fb3e8">)</span><span style="color:#4fb3e8">{</span><span style="color:#e8806a">1</span><span style="color:#dcdc8b">==</span><span style="color:#d0d0d0">e.code</span><span style="color:#dcdc8b">&amp;&amp;</span><span style="color:#d0d0d0">t.</span><span style="color:#f0a05a">setStorageSync</span><span style="color:#d4d4d4">(</span><span style="color:#4fb3e8">"</span><span style="color:#e8806a">configuration</span><span style="color:#4fb3e8">"</span><span style="color:#4fb3e8">,</span><span style="color:#d0d0d0">e.data</span><span style="color:#d4d4d4">)</span></div>
<div class="a code" style="top:calc(176px + 1px)"><span style="color:#4fb3e8">}</span><span style="color:#d4d4d4">)</span><span style="color:#d4d4d4">);</span><span style="color:#dcdc8b">var</span><span style="color:#d0d0d0"> e</span><span style="color:#d4d4d4">=</span><span style="color:#d0d0d0">t.</span><span style="color:#f0a05a">getSystemInfoSync</span><span style="color:#4fb3e8">(</span><span style="color:#4fb3e8">)</span><span style="color:#dcdc8b">;</span><span style="color:#4fb3e8">"</span><span style="color:#e7795f">web</span><span style="color:#4fb3e8">"</span><span style="color:#dcdc8b">==</span><span style="color:#d0d0d0">e.uniPlatform</span><span style="color:#dcdc8b">?</span><span style="color:#d0d0d0">t.</span></div>
<div class="a code" style="top:calc(208px + 1px)"><span style="color:#f0a05a">setStorageSync</span><span style="color:#d4d4d4">(</span><span style="color:#4fb3e8">"</span><span style="color:#e8806a">platform</span><span style="color:#4fb3e8">"</span><span style="color:#4fb3e8">,</span><span style="color:#4fb3e8">"</span><span style="color:#e8806a">mp</span><span style="color:#4fb3e8">"</span><span style="color:#d4d4d4">)</span><span style="color:#dcdc8b">:</span><span style="color:#d0d0d0">t.</span><span style="color:#f0a05a">setStorageSync</span><span style="color:#d4d4d4">(</span><span style="color:#4fb3e8">"</span><span style="color:#e8806a">platform</span><span style="color:#4fb3e8">"</span><span style="color:#4fb3e8">,</span></div>
<div class="a code" style="top:calc(240px + 1px)"><span style="color:#4fb3e8">"</span><span style="color:#e8806a">miniapp</span><span style="color:#4fb3e8">"</span><span style="color:#d4d4d4">)</span><span style="color:#4fb3e8">}}</span><span style="color:#dcdc8b">;</span><span style="color:#d0d0d0">e.default</span><span style="color:#d4d4d4">=</span><span style="color:#d0d0d0">o</span><span style="color:#4fb3e8">}</span><span style="color:#d4d4d4">)</span><span style="color:#d0d0d0">.</span><span style="color:#f0a05a">call</span><span style="color:#4fb3e8">(</span><span style="color:#4fb3e8">this</span><span style="color:#4fb3e8">,</span><span style="color:#f0a05a">n</span><span style="color:#d4d4d4">(</span><span style="color:#4fb3e8">"</span><span style="color:#e8806a">df3c</span><span style="color:#4fb3e8">"</span><span style="color:#d4d4d4">)</span><span style="color:#d4d4d4">[</span><span style="color:#4fb3e8">"</span><span style="color:#e8806a">default</span><span style="color:#4fb3e8">"</span><span style="color:#d4d4d4">]</span><span style="color:#d4d4d4">)</span><span style="color:#4fb3e8">}}</span><span style="color:#4fb3e8">,</span><span style="color:#d4d4d4">[</span></div>
<div class="a code" style="top:calc(272px + 1px)"><span style="color:#d4d4d4">[</span><span style="color:#4fb3e8">"</span><span style="color:#e8806a">c4a3</span><span style="color:#4fb3e8">"</span><span style="color:#4fb3e8">,</span><span style="color:#4fb3e8">"</span><span style="color:#e8806a">common/runtime</span><span style="color:#4fb3e8">"</span><span style="color:#4fb3e8">,</span><span style="color:#4fb3e8">"</span><span style="color:#e8806a">common/vendor</span><span style="color:#4fb3e8">"</span><span style="color:#d4d4d4">]</span><span style="color:#d4d4d4">]</span><span style="color:#d4d4d4">]</span><span style="color:#d4d4d4">)</span><span style="color:#4fb3e8">;</span></div>
<!-- ============ DEBUGGER ============ -->
<div class="a" style="left:611px;top:498px;width:639px;height:1px;background:#464646"></div>
<div class="a" style="left:611px;top:498px;width:639px;height:30px;background:#333333"></div>
<div class="a w" style="left:630px;top:498px;line-height:30px;font-size:12px;color:#9c9c9c">构建</div>
<div class="a w" style="left:673px;top:498px;line-height:30px;font-size:12px;color:#eeeeee">调试器</div>
<div class="a" style="left:673px;top:525px;width:34px;height:2px;background:#e6e6e6"></div>
<div class="a w" style="left:714px;top:506px;width:33px;height:17px;border-radius:8.5px;background:#d64541;color:#fff;font-size:11.5px;line-height:17px;text-align:center">5, 14</div>
<div class="a w" style="left:766px;top:498px;line-height:30px;font-size:12px;color:#9c9c9c">问题</div>
<div class="a w" style="left:808px;top:498px;line-height:30px;font-size:12px;color:#9c9c9c">输出</div>
<div class="a w" style="left:850px;top:498px;line-height:30px;font-size:12px;color:#9c9c9c">终端</div>
<div class="a w" style="left:892px;top:498px;line-height:30px;font-size:12px;color:#9c9c9c">代码质量</div>
<svg style="left:1185px;top:511px" width="12" height="7"><path d="M1 6l5-5 5 5" fill="none" stroke="#ccc" stroke-width="1.2"/></svg>
<svg style="left:1217px;top:509px" width="11" height="11"><path d="M0.5 0.5l10 10M10.5 0.5l-10 10" stroke="#ccc" stroke-width="1.2"/></svg>
<!-- devtools tabs -->
<div class="a" style="left:611px;top:528px;width:639px;height:26px;background:#292a2d;border-bottom:1px solid #3c3c3c"></div>
<svg style="left:621px;top:534px" width="14" height="14"><path d="M6 12.5H0.6V0.6h11.5V6" fill="none" stroke="#9a9a9a" stroke-width="1.1"/><path d="M6 6l7 2.5-3 1-1 3z" fill="#9a9a9a"/></svg>
<div class="a" style="left:645px;top:532px;width:1px;height:18px;background:#444"></div>
<div class="a" style="left:772px;top:528px;width:64px;height:25px;background:#000"></div>
<div class="a dt w" style="left:664px;top:528px">Wxml</div>
<div class="a dt w" style="left:718px;top:528px">Console</div>
<div class="a dt w" style="left:783px;top:528px;color:#fff">Sources</div>
<div class="a dt w" style="left:848px;top:528px">Network</div>
<div class="a dt w" style="left:917px;top:528px">Performance</div>
<svg style="left:1004px;top:537px" width="10" height="9"><path d="M1 1l3.5 3.5L1 8M5.5 1L9 4.5 5.5 8" fill="none" stroke="#aaa" stroke-width="1.2"/></svg>
<svg style="left:1073px;top:535px" width="12" height="12"><circle cx="6" cy="6" r="5.5" fill="#e8474b"/><path d="M4 4l4 4M8 4l-4 4" stroke="#fff" stroke-width="1.2"/></svg>
<div class="a dt w" style="left:1088px;top:528px">5</div>
<svg style="left:1100px;top:535px" width="12" height="11"><path d="M6 0.5L11.5 10.5H0.5z" fill="#f2c53c"/><path d="M6 4v3M6 8.3v1" stroke="#3a2e00" stroke-width="1.1"/></svg>
<div class="a dt w" style="left:1115px;top:528px">14</div>
<svg style="left:1133px;top:535px" width="10" height="10"><path d="M0.5 0.5h9v7H3L0.5 9.5z" fill="#3d8bf0"/><path d="M2.5 3h5M2.5 5h3" stroke="#fff" stroke-width="0.8"/></svg>
<div class="a dt w" style="left:1146px;top:528px">3</div>
<div class="a" style="left:1157px;top:533px;width:1px;height:17px;background:#444"></div>
<svg style="left:1170px;top:534px" width="15" height="15"><path d="M7.5 0.5l1.3 1.8 2.1-0.7 0.4 2.2 2.2 0.4-0.7 2.1 1.8 1.3-1.8 1.3 0.7 2.1-2.2 0.4-0.4 2.2-2.1-0.7-1.3 1.8-1.3-1.8-2.1 0.7-0.4-2.2-2.2-0.4 0.7-2.1L0.5 7.5l1.8-1.3-0.7-2.1 2.2-0.4 0.4-2.2 2.1 0.7z" fill="#9a9a9a"/><circle cx="7.5" cy="7.5" r="2.3" fill="#292a2d"/></svg>
<svg style="left:1203px;top:535px" width="4" height="13"><circle cx="2" cy="1.5" r="1.3" fill="#9a9a9a"/><circle cx="2" cy="6.5" r="1.3" fill="#9a9a9a"/><circle cx="2" cy="11.5" r="1.3" fill="#9a9a9a"/></svg>
<svg style="left:1224px;top:534px" width="18" height="15"><rect x="4" y="0.6" width="13.4" height="9.5" fill="none" stroke="#777" stroke-width="1.2"/><path d="M4 3h13.4" stroke="#777" stroke-width="2"/><path d="M0.6 5v9.4h13" fill="none" stroke="#777" stroke-width="1.2"/></svg>
<!-- sources left nav -->
<div class="a" style="left:611px;top:554px;width:235px;height:27px;background:#292a2d;border-bottom:1px solid #3c3c3c"></div>
<div class="a" style="left:611px;top:555px;width:45px;height:25px;background:#000"></div>
<div class="a dt w" style="left:621px;top:555.5px;color:#fff">Page</div>
<div class="a dt w" style="left:666px;top:555px">Filesystem</div>
<svg style="left:738px;top:564px" width="10" height="9"><path d="M1 1l3.5 3.5L1 8M5.5 1L9 4.5 5.5 8" fill="none" stroke="#aaa" stroke-width="1.2"/></svg>
<svg style="left:828px;top:561px" width="4" height="13"><circle cx="2" cy="1.5" r="1.3" fill="#aaa"/><circle cx="2" cy="6.5" r="1.3" fill="#aaa"/><circle cx="2" cy="11.5" r="1.3" fill="#aaa"/></svg>
<div class="a" style="left:611px;top:581px;width:221px;height:74px;background:#292a2d"></div>
<svg style="left:615px;top:591px" width="8" height="6"><path d="M0.5 0.5h7L4 6z" fill="#9a9a9a"/></svg>
<svg style="left:628px;top:588px" width="14" height="12"><rect x="0.6" y="0.6" width="12.5" height="10.5" fill="none" stroke="#9a9a9a" stroke-width="1.2"/><path d="M0.6 2.5h12.5" stroke="#9a9a9a" stroke-width="1.2"/></svg>
<div class="a w" style="left:648px;top:586px;line-height:19px;font-size:12.5px;color:#e6e6e6">top</div>
<svg style="left:627px;top:611px" width="8" height="6"><path d="M0.5 0.5h7L4 6z" fill="#9a9a9a"/></svg>
<svg style="left:638px;top:607px" width="19" height="12"><path d="M4.5 11.3a3.8 3.8 0 0 1-0.5-7.5a5 5 0 0 1 9.5 0.5a3.5 3.5 0 0 1 1 7z" fill="none" stroke="#9a9a9a" stroke-width="1.2"/></svg>
<div class="a w" style="left:661px;top:606px;line-height:19px;font-size:12.5px;color:#e6e6e6">127.0.0.1:11191</div>
<svg style="left:639px;top:632px" width="8" height="6"><path d="M0.5 0.5h7L4 6z" fill="#9a9a9a"/></svg>
<svg style="left:652px;top:628px" width="15" height="13"><path d="M0 1h5l1.5 1.5H15V13H0z" fill="#1a5fb4"/></svg>
<div class="a w" style="left:672px;top:627px;line-height:19px;font-size:12.5px;color:#e6e6e6">appservice</div>
<div class="a" style="left:611px;top:642px;width:221px;height:13px;background:#2a2a2a"></div>
<div class="a" style="left:611px;top:642px;width:129px;height:13px;background:#3f3f3f"></div>
<div class="a" style="left:832px;top:581px;width:14px;height:74px;background:#2a2a2a"></div>
<div class="a" style="left:832px;top:581px;width:14px;height:18px;background:#3f3f3f"></div>
<div class="a" style="left:846px;top:554px;width:1px;height:101px;background:#3c3c3c"></div>
<!-- sources right -->
<div class="a" style="left:847px;top:554px;width:403px;height:26px;background:#292a2d;border-bottom:1px solid #3c3c3c"></div>
<svg style="left:856px;top:561px" width="15" height="13"><rect x="0.6" y="0.6" width="13.5" height="11.5" fill="none" stroke="#9a9a9a" stroke-width="1.1"/><path d="M4.5 0.6v11.5" stroke="#9a9a9a" stroke-width="1.1"/><path d="M11 3.5v6L7 6.5z" fill="#9a9a9a"/></svg>
<div class="a" style="left:847px;top:580px;width:403px;height:48px;background:#3c3c3c"></div>
<div class="a" style="left:847px;top:628px;width:403px;height:27px;background:#292a2d;border-top:1px solid #4a4a4a"></div>
<svg style="left:1226px;top:634px" width="15" height="15"><rect x="0.6" y="0.6" width="13.5" height="13.5" fill="none" stroke="#9a9a9a" stroke-width="1.1"/><path d="M0.6 10.5h13.5" stroke="#9a9a9a" stroke-width="1.1"/><path d="M3.5 3.5h8L7.5 8z" fill="#9a9a9a"/></svg>
<div class="a" style="left:611px;top:655px;width:639px;height:1px;background:#3c3c3c"></div>
<!-- debugger controls -->
<div class="a" style="left:611px;top:656px;width:319px;height:26px;background:#292a2d;border-bottom:1px solid #3c3c3c"></div>
<svg style="left:622px;top:664px" width="10" height="10"><rect x="0.5" y="0.5" width="3" height="9" fill="#9a9a9a"/><rect x="6" y="0.5" width="3" height="9" fill="#9a9a9a"/></svg>
<svg style="left:646px;top:661px" width="20" height="14"><path d="M2 10a7.5 7.5 0 0 1 14-2.5" fill="none" stroke="#666" stroke-width="2.4"/><path d="M17.5 3v6h-6z" fill="#666"/><circle cx="9.5" cy="11.5" r="1.6" fill="#666"/></svg>
<svg style="left:680px;top:660px" width="8" height="17"><path d="M4 0v8M1 5l3 3 3-3" fill="none" stroke="#666" stroke-width="2.2"/><circle cx="4" cy="13.5" r="1.8" fill="#666"/></svg>
<svg style="left:707px;top:660px" width="8" height="17"><path d="M4 9V1M1 4l3-3 3 3" fill="none" stroke="#666" stroke-width="2.2"/><circle cx="4" cy="13.5" r="1.8" fill="#666"/></svg>
<svg style="left:731px;top:664px" width="16" height="10"><path d="M0 5h8M5 2l3 3-3 3" fill="none" stroke="#666" stroke-width="2.2"/><circle cx="13" cy="5" r="1.8" fill="#666"/></svg>
<div class="a" style="left:758px;top:660px;width:1px;height:18px;background:#444"></div>
<svg style="left:765px;top:660px" width="20" height="17"><path d="M1 4h10l-8 10H1z" fill="#9a9a9a"/><path d="M9 14h7l3-5-3-5h-2z" fill="#9a9a9a"/><path d="M3 16L16 1" stroke="#9a9a9a" stroke-width="1.5"/></svg>
<svg style="left:795px;top:660px" width="17" height="17"><circle cx="8.5" cy="8.5" r="8" fill="#9a9a9a"/><rect x="5.5" y="5" width="2" height="7" fill="#292a2d"/><rect x="9.5" y="5" width="2" height="7" fill="#292a2d"/></svg>
<!-- call stack -->
<div class="a" style="left:611px;top:683px;width:305px;height:20px;background:#292a2d;border-bottom:1px solid #3c3c3c"></div>
<svg style="left:617px;top:690px" width="8" height="7"><path d="M0.5 0.5h7L4 6.5z" fill="#9a9a9a"/></svg>
<div class="a w" style="left:628px;top:683px;line-height:20px;font-size:12.5px;color:#e6e6e6">Call Stack</div>
<div class="a" style="left:611px;top:704px;width:305px;height:28px;background:#242424;border-bottom:1px solid #3c3c3c"></div>
<div class="a w" style="left:611px;top:705.5px;width:305px;text-align:center;line-height:27px;font-size:12px;font-style:italic;color:#bdbdbd">Not paused</div>
<div class="a" style="left:611px;top:732px;width:305px;height:21px;background:#292a2d;border-bottom:1px solid #3c3c3c"></div>
<svg style="left:617px;top:740px" width="8" height="7"><path d="M0.5 0.5h7L4 6.5z" fill="#9a9a9a"/></svg>
<div class="a w" style="left:628px;top:733px;line-height:20px;font-size:12.5px;color:#e6e6e6">Breakpoints</div>
<div class="a" style="left:611px;top:753px;width:305px;height:22px;background:#242424"></div>
<div class="a w" style="left:611px;top:759.5px;width:305px;text-align:center;line-height:20px;font-size:12px;font-style:italic;color:#bdbdbd">No breakpoints</div>
<div class="a" style="left:916px;top:682px;width:14px;height:93px;background:#2a2a2a"></div>
<div class="a" style="left:916px;top:682px;width:14px;height:46px;background:#3f3f3f"></div>
<div class="a" style="left:930px;top:656px;width:1px;height:119px;background:#3c3c3c"></div>
<!-- scope -->
<div class="a" style="left:931px;top:656px;width:319px;height:25px;background:#292a2d;border-bottom:1px solid #3c3c3c"></div>
<div class="a" style="left:931px;top:656px;width:52px;height:25px;background:#000"></div>
<div class="a dt w" style="left:940px;top:657.5px;line-height:25px;color:#fff">Scope</div>
<div class="a dt w" style="left:992px;top:657.5px;line-height:25px">Watch</div>
<div class="a" style="left:931px;top:682px;width:319px;height:93px;background:#242424"></div>
<div class="a w" style="left:931px;top:688px;width:319px;text-align:center;line-height:20px;font-size:12px;font-style:italic;color:#bdbdbd">Not paused</div>
<!-- console drawer -->
<div class="a" style="left:611px;top:775px;width:639px;height:1px;background:#3c3c3c"></div>
<div class="a" style="left:611px;top:776px;width:639px;height:26px;background:#292a2d;border-bottom:1px solid #3c3c3c"></div>
<svg style="left:626px;top:783px" width="4" height="13"><circle cx="2" cy="1.5" r="1.3" fill="#9a9a9a"/><circle cx="2" cy="6.5" r="1.3" fill="#9a9a9a"/><circle cx="2" cy="11.5" r="1.3" fill="#9a9a9a"/></svg>
<div class="a" style="left:639px;top:776px;width:62px;height:25px;background:#000"></div>
<div class="a dt w" style="left:648px;top:776px;line-height:26px;color:#fff">Console</div>
<div class="a dt w" style="left:711px;top:776px;line-height:26px">Task</div>
<svg style="left:1227px;top:783px" width="11" height="11"><path d="M0.5 0.5l10 10M10.5 0.5l-10 10" stroke="#aaa" stroke-width="1.2"/></svg>
<div class="a" style="left:611px;top:802px;width:639px;height:26px;background:#292a2d;border-bottom:1px solid #3c3c3c"></div>
<svg style="left:619px;top:809px" width="15" height="13"><rect x="0.6" y="0.6" width="13.5" height="11.5" fill="none" stroke="#9a9a9a" stroke-width="1.1"/><path d="M3.5 0.6v11.5" stroke="#9a9a9a" stroke-width="1.1"/><path d="M6.5 3.5v6l4-3z" fill="#9a9a9a"/></svg>
<svg style="left:648px;top:809px" width="14" height="14"><circle cx="7" cy="7" r="5.8" fill="none" stroke="#9a9a9a" stroke-width="1.6"/><path d="M3 3l8 8" stroke="#9a9a9a" stroke-width="1.6"/></svg>
<div class="a" style="left:672px;top:807px;width:1px;height:17px;background:#444"></div>
<div class="a dt w" style="left:683px;top:803.5px;line-height:27px">top</div>
<svg style="left:803px;top:812px" width="9" height="7"><path d="M0.5 0.5h8L4.5 6.5z" fill="#9a9a9a"/></svg>
<div class="a" style="left:823px;top:807px;width:1px;height:17px;background:#444"></div>
<svg style="left:830px;top:810px" width="17" height="11"><path d="M0.5 5.5Q8.5 -3 16.5 5.5Q8.5 14 0.5 5.5z" fill="#9a9a9a"/><circle cx="8.5" cy="5.5" r="2.8" fill="#292a2d"/><circle cx="8.5" cy="5.5" r="1.5" fill="#9a9a9a"/></svg>
<div class="a" style="left:863px;top:807px;width:1px;height:17px;background:#444"></div>
<div class="a" style="left:865px;top:805px;width:146px;height:22px;border:1px solid #4a4a4a;background:#242424"></div>
<div class="a dt w" style="left:871px;top:804px;line-height:27px">Filter</div>
<div class="a dt w" style="left:1019px;top:804px;line-height:27px">Default levels</div>
<svg style="left:1094px;top:812px" width="8" height="7"><path d="M0.5 0.5h7L4 6.5z" fill="#9a9a9a"/></svg>
<div class="a" style="left:1212px;top:807px;width:1px;height:17px;background:#444"></div>
<svg style="left:1225px;top:808px" width="15" height="15"><path d="M7.5 0.5l1.3 1.8 2.1-0.7 0.4 2.2 2.2 0.4-0.7 2.1 1.8 1.3-1.8 1.3 0.7 2.1-2.2 0.4-0.4 2.2-2.1-0.7-1.3 1.8-1.3-1.8-2.1 0.7-0.4-2.2-2.2-0.4 0.7-2.1L0.5 7.5l1.8-1.3-0.7-2.1 2.2-0.4 0.4-2.2 2.1 0.7z" fill="#9a9a9a"/><circle cx="7.5" cy="7.5" r="2.3" fill="#292a2d"/></svg>
<!-- console messages -->
<div class="a" style="left:611px;top:829px;width:625px;height:142px;background:#242424"></div>
<div class="a" style="left:611px;top:829px;width:625px;height:18px;background:#242424"></div>
<svg style="left:621px;top:835px" width="8" height="7"><path d="M0.5 0.5h7L4 6.5z" fill="#9a9a9a"/></svg>
<div class="a mono w" style="left:635px;top:829px;line-height:18px;color:#eaeaea;font-weight:bold">Mon Dec 29 2025 14:55:40 GMT+0800 (<span style="font-size:12px">中国标准时间</span>) <span style="font-size:12px">游客模式</span></div>
<div class="a" style="left:611px;top:847px;width:625px;height:20px;background:#332b00;border-top:1px solid #665200;border-bottom:1px solid #665200"></div>
<div class="a" style="left:624px;top:847px;width:1px;height:20px;background:#665200"></div>
<div class="a" style="left:611px;top:867px;width:625px;height:20px;background:#332b00;border-bottom:1px solid #665200"></div>
<div class="a" style="left:611px;top:887px;width:625px;height:47px;background:#332b00;border-bottom:1px solid #665200"></div>
<svg style="left:632px;top:851px" width="12" height="11"><path d="M6 0.5L11.5 10.5H0.5z" fill="#f2c53c"/><path d="M6 4v3M6 8.3v1" stroke="#332b00" stroke-width="1.2"/></svg><div class="a mono w" style="left:649px;top:848px;line-height:18px;color:#e6e1cc"><span style="font-size:12px">请注意游客模式下，调用</span> wx.operateWXData <span style="font-size:12px">是受限的</span>, API <span style="font-size:12px">的返回是工具的模拟返回</span></div>
<svg style="left:617px;top:871px" width="12" height="11"><path d="M6 0.5L11.5 10.5H0.5z" fill="#f2c53c"/><path d="M6 4v3M6 8.3v1" stroke="#332b00" stroke-width="1.2"/></svg><div class="a mono w" style="left:635px;top:868px;line-height:18px;color:#e6e1cc">[<span style="font-size:12px">自动热重载</span>] <span style="font-size:12px">已开启代码文件保存后自动热重载</span></div>
<svg style="left:617px;top:891px" width="12" height="11"><path d="M6 0.5L11.5 10.5H0.5z" fill="#f2c53c"/><path d="M6 4v3M6 8.3v1" stroke="#332b00" stroke-width="1.2"/></svg><div class="a mono" style="left:635px;top:891px;line-height:14px;color:#e6e1cc">[pages/me/me] Some selectors are not allowed in component wxss, including tag name
selectors, ID selectors, and attribute selectors.(<u>./uni_modules/uview-ui/components/u-i
con/u-icon.wxss:1</u>:446)</div>
<svg style="left:620px;top:941px" width="6" height="9"><path d="M1 1l3.5 3.5L1 8" fill="none" stroke="#3d7fd9" stroke-width="1.4"/></svg>
<div class="a" style="left:1236px;top:829px;width:14px;height:142px;background:#2a2a2a"></div>
<div class="a" style="left:1236px;top:829px;width:14px;height:17px;background:#3a3a3a"></div>
<!-- status bar -->
<div class="a" style="left:611px;top:972px;width:639px;height:28px;background:#333333"></div>
<div class="a w" style="left:955px;top:972px;line-height:28px;font-size:12px;color:#a8a8a8">行 1，列 3314</div>
<div class="a w" style="left:1046px;top:972px;line-height:28px;font-size:12px;color:#a8a8a8">空格: 2</div>
<div class="a w" style="left:1099px;top:972px;line-height:28px;font-size:12px;color:#a8a8a8">UTF-8</div>
<div class="a w" style="left:1146px;top:972px;line-height:28px;font-size:12px;color:#a8a8a8">CRLF</div>
<div class="a w" style="left:1188px;top:972px;line-height:28px;font-size:11.4px;color:#a8a8a8">JavaScript</div>
</body></html>
